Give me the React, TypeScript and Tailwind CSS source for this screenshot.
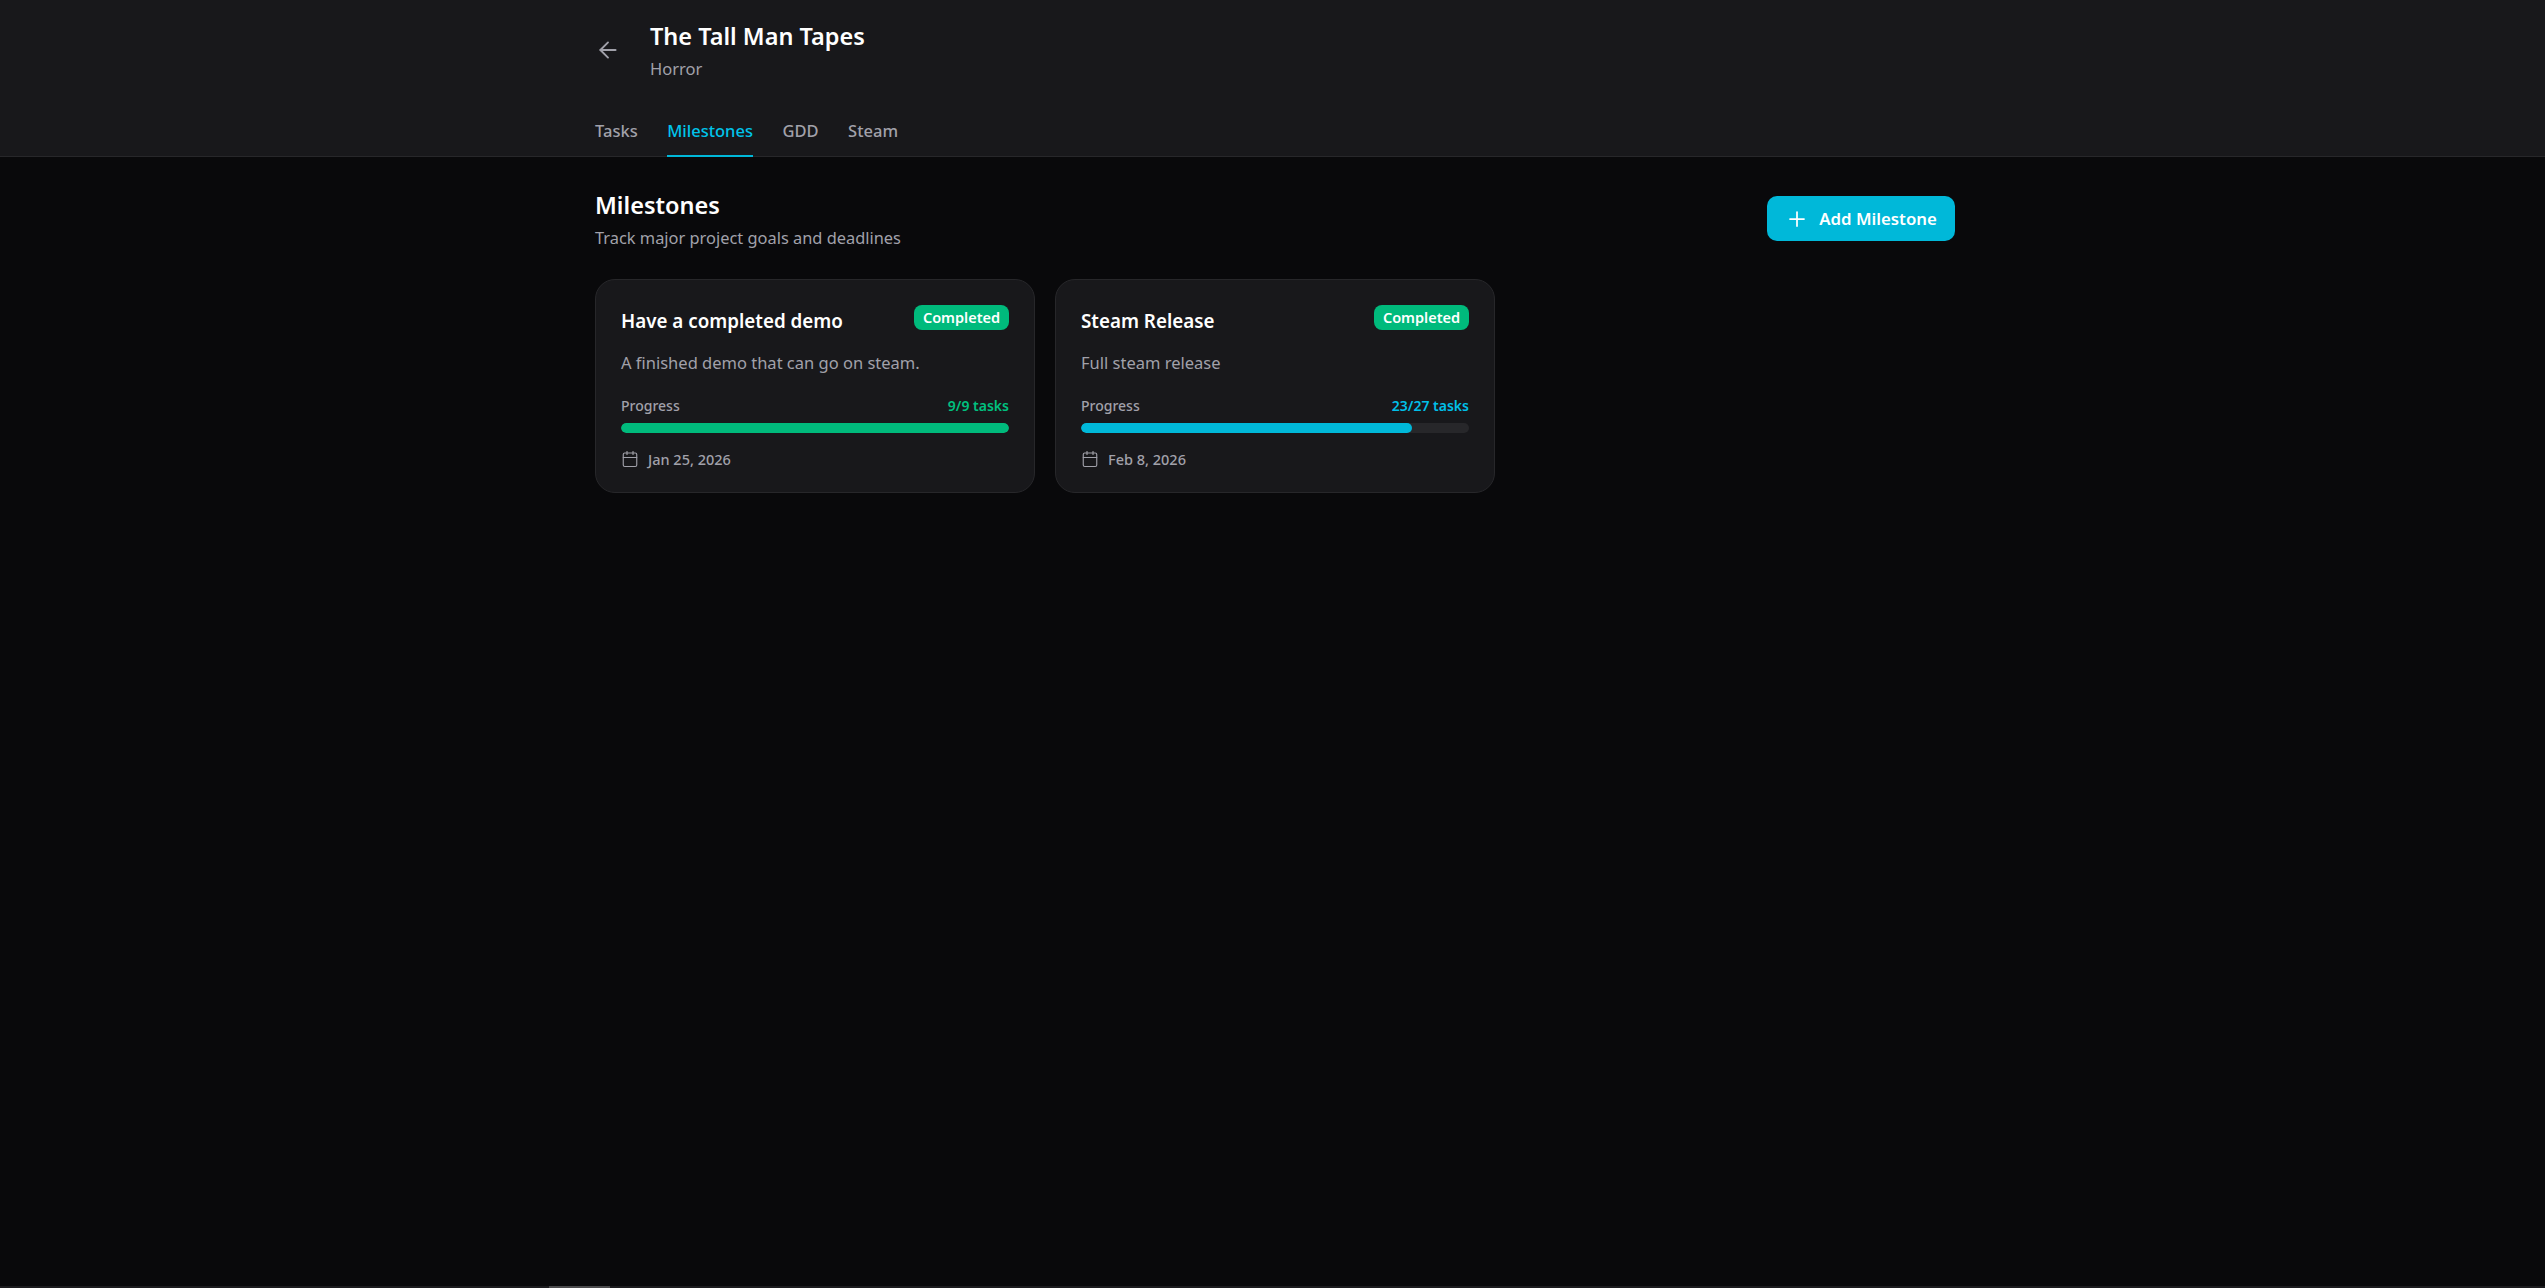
import { ArrowLeft, Calendar, Plus } from "lucide-react";

const tabs = ["Tasks", "Milestones", "GDD", "Steam"];

const milestones = [
  { title: "Have a completed demo", description: "A finished demo that can go on steam.", tasks: "9/9 tasks", percent: 100, date: "Jan 25, 2026", done: true },
  { title: "Steam Release", description: "Full steam release", tasks: "23/27 tasks", percent: 85.2, date: "Feb 8, 2026", done: false },
];

function MilestoneCard({ item }: { item: (typeof milestones)[number] }) {
  return (
    <div className="h-[214px] rounded-[20px] border border-[#27272a] bg-[#18181b] px-[25px] pt-[25px]">
      <div className="flex items-start justify-between">
        <h3 className="pt-[2px] text-[18.8px] leading-[28px] font-semibold text-white">{item.title}</h3>
        <span className="flex h-[25px] w-[95px] items-center justify-center rounded-[8px] bg-[#00ba7c] pt-[1px] text-[14.5px] font-semibold text-white">Completed</span>
      </div>
      <p className="mt-[16px] text-[16.5px] leading-[24px] text-[#a1a1aa]">{item.description}</p>
      <div className="mt-[21px] flex items-center justify-between text-[14px] leading-[20px]">
        <span className="font-medium text-[#a1a1aa]">Progress</span>
        <span className={item.done ? "font-semibold text-[#00c07f]" : "font-semibold text-[#00bfe8]"}>{item.tasks}</span>
      </div>
      <div className="mt-[7px] h-[10px] overflow-hidden rounded-full bg-[#27272a]">
        <div
          className={item.done ? "h-full rounded-full bg-[#00ba7c]" : "h-full rounded-full bg-[#00b8d9]"}
          style={{ width: `${item.percent}%` }}
        />
      </div>
      <div className="mt-[16px] flex items-center gap-[9px] text-[14.5px] leading-[20px] font-medium text-[#a1a1aa]">
        <Calendar className="h-[18px] w-[18px]" strokeWidth={1.5} />
        <span>{item.date}</span>
      </div>
    </div>
  );
}

export default function App() {
  return (
    <div className="flex min-h-screen flex-col bg-[#09090b] font-['Noto_Sans',sans-serif]">
      <header className="h-[157px] border-b border-[#27272a] bg-[#18181b]">
        <div className="ml-[595px] w-[1360px]">
          <div className="flex items-center gap-[29px] pt-[18px]">
            <ArrowLeft className="h-[26px] w-[26px] text-[#a1a1aa]" strokeWidth={1.75} />
            <div>
              <h1 className="text-[23.5px] leading-[36px] font-semibold text-white">The Tall Man Tapes</h1>
              <p className="pt-[2px] text-[16.5px] leading-[26px] text-[#a1a1aa]">Horror</p>
            </div>
          </div>
          <nav className="mt-[23px] flex gap-[29.5px]">
            {tabs.map((tab) => (
              <span
                key={tab}
                className={
                  tab === "Milestones"
                    ? "h-[52px] border-b-2 border-[#00b8d9] pt-[14px] text-[16.5px] font-medium text-[#00c4ea]"
                    : "h-[52px] pt-[14px] text-[16.5px] font-medium text-[#a1a1aa]"
                }
              >
                {tab}
              </span>
            ))}
          </nav>
        </div>
      </header>
      <main className="ml-[595px] w-[1360px] flex-1">
        <div className="flex items-start justify-between pt-[30px]">
          <div>
            <h2 className="text-[23.5px] leading-[36px] font-semibold text-white">Milestones</h2>
            <p className="pt-[3px] text-[16.4px] leading-[24px] text-[#a1a1aa]">Track major project goals and deadlines</p>
          </div>
          <button className="mt-[9px] flex h-[45px] w-[188px] items-center justify-center gap-[10px] rounded-[10px] bg-[#00b8d9] text-[16.8px] font-semibold text-white">
            <Plus className="h-[24px] w-[24px]" strokeWidth={1.75} />
            <span className="pt-[1px]">Add Milestone</span>
          </button>
        </div>
        <div className="mt-[29px] grid grid-cols-3 gap-[20px]">
          {milestones.map((item) => (
            <MilestoneCard key={item.title} item={item} />
          ))}
        </div>
      </main>
      <div className="h-[2px] bg-[#1c1c1f] pl-[549px]">
        <div className="h-full w-[61px] bg-[#4b4b4d]" />
      </div>
    </div>
  );
}
